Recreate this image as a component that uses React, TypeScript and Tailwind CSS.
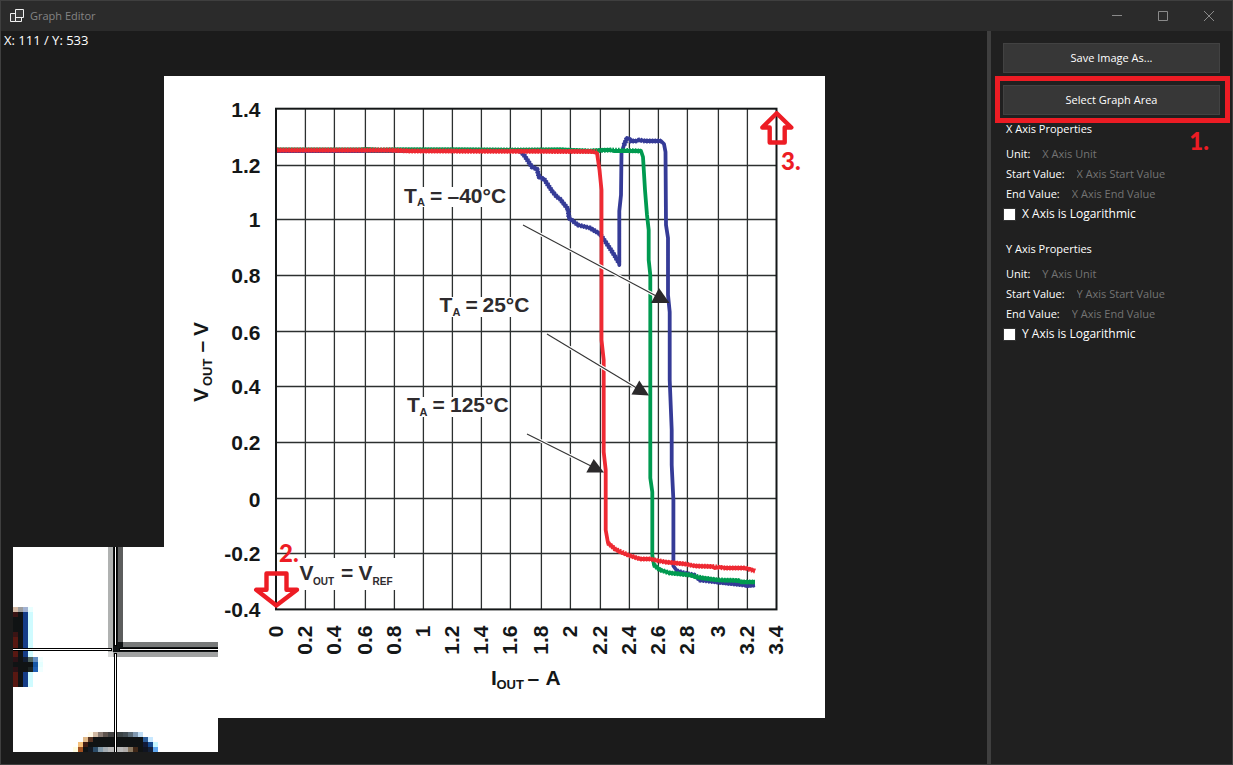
import React from 'react';

const GRID_X = [305, 334, 365, 394, 423, 452, 481, 510, 541, 570, 600, 629, 658, 687, 718, 747];
const GRID_Y = [165, 219, 275, 331, 386, 442, 498, 553];

const X_LABELS: [number, string][] = [
  [276, '0'], [305, '0.2'], [334, '0.4'], [365, '0.6'], [394, '0.8'], [423, '1'],
  [452, '1.2'], [481, '1.4'], [510, '1.6'], [541, '1.8'], [570, '2'], [600, '2.2'],
  [629, '2.4'], [658, '2.6'], [687, '2.8'], [718, '3'], [747, '3.2'], [776, '3.4'],
];

const Y_LABELS: [number, string][] = [
  [109, '1.4'], [165, '1.2'], [219, '1'], [275, '0.8'], [332, '0.6'],
  [386, '0.4'], [442, '0.2'], [499, '0'], [553, '-0.2'], [609, '-0.4'],
];

const CURVES = [
  {
    color: '#353b97',
    points:
      '277,151 300,151 400,151 520,151 524,155 528,161 532,167 537,169 539,177 544,179 552,191 557,197 560,199 568,209 569,218 578,225 590,228 600,234 607,244 613,253 619,263 619.3,265 619.3,211 621,195 621.5,153 624,145 627,138 630,139 631,141 636,141 639,140 645,141 661,141 664,144 665.5,152 666,225 668,238 668,295 669.7,312 669.7,380 671.7,430 671.7,465 673.4,500 673.4,566 677,571 684,573 694,575 700,580 710,581 717,582 725,583 745,585 747,586 755,585',
  },
  {
    color: '#009a50',
    points:
      '277,149.5 360,149.5 366,149 380,150 395,149.5 460,149.5 520,150 560,149.5 590,151 603,150 610,150 614,151 641,151 643,157 645,190 647,215 648.7,230 648.7,260 650.3,275 650.3,478 652.3,492 652.3,555 654,565 660,570 670,573 690,575 695,577 703,578 718,580 738,580.5 742,582 755,582',
  },
  {
    color: '#ee2a33',
    points:
      '277,150.3 390,150.3 410,151 590,151.5 597,153 599.5,170 601.5,190 601.5,340 603.7,360 603.7,452 605.7,470 605.7,530 608,543 615,549 620,552 628,555 640,559 650,559 665,562 675,563 685,564 695,566 712,566.5 715,568 720,567 725,568 745,568 750,569 755,571',
  },
];

/* Short cross strokes that give the sampled stretches their comb-like edge */
const SAMPLED = [
  { color: '#353b97', points: '520,151 524,155 528,161 532,167 537,169 539,177 544,179 552,191 557,197 560,199 568,209 569,218 578,225 590,228 600,234 607,244 613,253 619,263' },
  { color: '#353b97', points: '624,145 627,138 631,141 636,141 639,140 645,141 661,141' },
  { color: '#353b97', points: '677,571 684,573 694,575 700,580 717,582 745,585 755,585' },
  { color: '#009a50', points: '366,150 460,150 560,150 590,151 610,150 641,151' },
  { color: '#009a50', points: '654,565 660,570 670,573 690,575 703,578 718,580 738,580.5 742,582 755,582' },
  { color: '#ee2a33', points: '277,150 390,150 410,151 597,151.5' },
  { color: '#ee2a33', points: '608,543 615,549 628,555 640,559 650,559 665,562 685,564 695,566 712,566.5 725,568 745,568 755,571' },
];

const POINTERS = [
  { line: '523,225 660,298', head: '659,288 669.5,303 651,303' },
  { line: '547,334 640,390', head: '639.3,380.5 649,395.5 631.5,394.5' },
  { line: '527,434 595,468', head: '593.7,459 604,472.5 586.3,472.5' },
];

function Chart() {
  return (
    <svg
      viewBox="164 76 661 642"
      className="w-[661px] max-w-full bg-white"
      role="img"
      aria-label="Output voltage against output current"
      fontFamily="'Liberation Sans', Arial, sans-serif"
      fontWeight="bold"
      fontSize="21"
      fill="#141718"
    >
      <g strokeWidth="1.3" stroke="#2c3030">
        {GRID_X.map((x) => (
          <line key={x} x1={x + 0.4} x2={x + 0.4} y1="109" y2="609" />
        ))}
        {GRID_Y.map((y) => (
          <line key={y} x1="276" x2="776" y1={y + 0.5} y2={y + 0.5} />
        ))}
      </g>
      <rect x="276" y="108.7" width="500.5" height="500.7" fill="none" stroke="#141718" strokeWidth="2" />

      {Y_LABELS.map(([y, label]) => (
        <text key={label} x="260.5" y={y + 7.5} textAnchor="end">{label}</text>
      ))}
      {X_LABELS.map(([x, label]) => (
        <text key={label} transform={`translate(${x + 7} 625.5) rotate(-90)`} textAnchor="end">{label}</text>
      ))}

      <g fill="white">
        <rect x="402" y="187" width="105" height="20" />
        <rect x="438" y="297" width="93" height="20" />
        <rect x="405" y="397" width="104" height="20" />
        <rect x="298" y="558" width="98" height="32" />
      </g>

      <g fill="none" strokeLinejoin="round">
        {CURVES.map((curve) => (
          <g key={curve.color} stroke={curve.color}>
            <polyline points={curve.points} strokeWidth="3.8" />
            {SAMPLED.filter((s) => s.color === curve.color).map((s) => (
              <polyline key={s.points} points={s.points} strokeWidth="5" strokeDasharray="1.6 1.2" />
            ))}
          </g>
        ))}
      </g>

      {POINTERS.map((p) => (
        <g key={p.line}>
          <polyline points={p.line} fill="none" stroke="white" strokeWidth="3.4" />
          <polyline points={p.line} fill="none" stroke="#333" strokeWidth="1.1" />
          <polygon points={p.head} fill="#2b292b" />
        </g>
      ))}

      <g fill="#2e2b2e">
        <text y="203"><tspan x="404">T</tspan><tspan x="417" y="206" fontSize="11">A</tspan><tspan x="430" y="203">=</tspan><tspan x="447.5">–40°C</tspan></text>
        <text y="312"><tspan x="439.5">T</tspan><tspan x="452.5" y="316" fontSize="11">A</tspan><tspan x="465.5" y="312">=</tspan><tspan x="482.5">25°C</tspan></text>
        <text y="412"><tspan x="407">T</tspan><tspan x="419.5" y="416" fontSize="11">A</tspan><tspan x="432.5" y="412">=</tspan><tspan x="450">125°C</tspan></text>
        <text y="580"><tspan x="299.5">V</tspan><tspan x="313" y="585" fontSize="10">OUT</tspan><tspan x="341" y="580">=</tspan><tspan x="358.5">V</tspan><tspan x="372.5" y="585" fontSize="10">REF</tspan></text>
      </g>
      <text y="685"><tspan x="491">I</tspan><tspan x="496.5" y="689" fontSize="13">OUT</tspan><tspan x="527.5" y="685">–</tspan><tspan x="545.5">A</tspan></text>
      <text transform="translate(207.5 402) rotate(-90)"><tspan x="0" y="0">V</tspan><tspan x="16" y="4" fontSize="13">OUT</tspan><tspan x="49.5" y="0">–</tspan><tspan x="66">V</tspan></text>

      <g fill="none" stroke="#ed1c24" strokeWidth="4.4" strokeLinejoin="round">
        <path d="M776.7 113.2 791.3 127.5H784.7V142.5H769.7V127.5H762.3Z" />
        <path d="M266.5 573.5H286.5V589.8H297L276.3 605.5 256.2 589.8H266.5Z" />
      </g>
      <g fill="#ed1c24" fontFamily="Lato, sans-serif" fontWeight="900" fontSize="24">
        <text x="279" y="562">2.</text>
        <text x="781" y="170">3.</text>
      </g>
    </svg>
  );
}

/* Enlarged pixels: x, y, width, height, colour */
const PIXELS: [number, number, number, number, string][] = [
  [95, 0, 5, 105, '#b0b2b1'], [100, 0, 5, 105, '#101314'], [105, 0, 5, 95, '#5c5d5d'],
  [110, 95, 95, 5, '#777979'], [105, 95, 5, 10, '#101314'], [110, 100, 95, 5, '#101314'],
  [100, 105, 105, 5, '#a0a1a1'], [95, 105, 5, 5, '#dcdcdc'],
  [0, 60, 5, 5, '#d4baa6'], [5, 60, 5, 5, '#9e9e9e'], [10, 60, 5, 5, '#a2b2d2'], [15, 60, 5, 5, '#eaffff'],
  [0, 65, 5, 75, '#581812'], [5, 65, 5, 75, '#101314'], [10, 65, 5, 75, '#153d88'], [15, 65, 5, 75, '#cffbff'],
  [0, 65, 5, 5, '#3a1414'], [0, 70, 5, 15, '#101314'], [0, 85, 5, 5, '#3a1414'],
  [0, 110, 5, 5, '#2a1216'], [10, 110, 5, 5, '#121e34'], [15, 110, 5, 5, '#4f6460'], [20, 110, 5, 5, '#5f8cc2'], [25, 110, 5, 5, '#f0ffff'],
  [0, 115, 20, 5, '#101314'], [20, 115, 5, 5, '#1656a5'], [25, 115, 5, 5, '#e5ffff'],
  [0, 120, 5, 5, '#2a1216'], [10, 120, 5, 5, '#101314'], [15, 120, 5, 5, '#1c2424'], [20, 120, 5, 5, '#2060b4'], [25, 120, 5, 5, '#f0ffff'],
  [75, 185, 5, 5, '#fffae8'], [80, 185, 5, 5, '#d2baa4'], [85, 185, 5, 5, '#8a7c74'], [90, 185, 5, 5, '#5e544e'],
  [95, 185, 10, 5, '#424242'], [105, 185, 5, 5, '#3c4446'], [110, 185, 5, 5, '#444e54'], [115, 185, 5, 5, '#5c6c78'],
  [120, 185, 5, 5, '#8098b0'], [125, 185, 5, 5, '#bfdcf4'],
  [70, 190, 5, 5, '#e0b888'], [75, 190, 5, 5, '#583424'], [80, 190, 50, 5, '#101314'], [130, 190, 5, 5, '#2c5c98'], [135, 190, 5, 5, '#c8e8ff'],
  [65, 195, 5, 5, '#f5c07a'], [70, 195, 5, 5, '#401c14'], [75, 195, 55, 5, '#101314'], [130, 195, 5, 5, '#111a38'], [135, 195, 5, 5, '#154a90'], [140, 195, 5, 5, '#c8f8ff'],
  [60, 200, 5, 5, '#fffde0'], [65, 200, 5, 5, '#a05020'], [70, 200, 5, 5, '#101314'], [75, 200, 5, 5, '#141a24'], [80, 200, 5, 5, '#2c4c68'],
  [85, 200, 5, 5, '#8098a8'], [90, 200, 5, 5, '#a4acb2'], [95, 200, 15, 5, '#b8b8b8'], [110, 200, 5, 5, '#b0acaa'], [115, 200, 5, 5, '#8a7860'],
  [120, 200, 5, 5, '#402818'], [125, 200, 5, 5, '#101314'], [130, 200, 5, 5, '#101420'], [135, 200, 5, 5, '#142038'], [140, 200, 5, 5, '#60a8f0'],
];

function Magnifier() {
  return (
    <svg
      viewBox="0 0 205 205"
      shapeRendering="crispEdges"
      className="absolute bottom-3 left-3 size-[205px] bg-white"
      role="img"
      aria-label="Magnified cursor area"
    >
      {PIXELS.map(([x, y, w, h, fill], i) => (
        <rect key={i} x={x} y={y} width={w} height={h} fill={fill} />
      ))}
      <path fill="#000" d="M0 101H99V104H0ZM106 101H205V104H106ZM101 0H104V99H101ZM101 106H104V205H101Z" />
      <path fill="#fff" d="M0 102H98V103H0ZM107 102H205V103H107ZM102 0H103V98H102ZM102 107H103V205H102Z" />
    </svg>
  );
}

function TitleBar() {
  const control = 'flex w-[46px] items-center justify-center';
  return (
    <header className="flex h-[30px] shrink-0 items-stretch bg-[#2b2b2b]">
      <div className="flex flex-1 items-center gap-[5px] pl-2">
        <svg width="16" height="16" viewBox="0 0 16 16" fill="#3a3a3a" stroke="#f0f0f0" aria-hidden="true">
          <path d="M1.5 5.5H6.5V13.5H1.5ZM6.5 9.5H12.5V13.5H6.5ZM6.5 1.5H14.5V9.5H6.5Z" />
        </svg>
        <h1 className="text-[#848484]">Graph Editor</h1>
      </div>
      <button type="button" aria-label="Minimize" className={control}>
        <svg width="12" height="12" viewBox="0 0 12 12" fill="none" stroke="#8a8a8a"><path d="M1 5.5H11" /></svg>
      </button>
      <button type="button" aria-label="Maximize" className={control}>
        <svg width="12" height="12" viewBox="0 0 12 12" fill="none" stroke="#8a8a8a"><path d="M1.5 1.5H10.5V10.5H1.5Z" /></svg>
      </button>
      <button type="button" aria-label="Close" className={control}>
        <svg width="12" height="12" viewBox="0 0 12 12" fill="none" stroke="#8a8a8a"><path d="M1 1 11 11M11 1 1 11" /></svg>
      </button>
    </header>
  );
}

function AxisField({ axis, name }: { axis: string; name: string }) {
  const id = `${axis}-${name}`.toLowerCase().replace(' ', '-');
  return (
    <div className="flex h-5 items-center gap-3 pl-[3px]">
      <label htmlFor={id} className="shrink-0">{name}:</label>
      <input
        id={id}
        type="text"
        placeholder={`${axis} Axis ${name}`}
        className="h-5 min-w-0 flex-1 bg-transparent outline-none placeholder:text-[#747474]"
      />
    </div>
  );
}

function AxisSection({ axis }: { axis: string }) {
  return (
    <section>
      <h2 className="mb-[5px] h-5 pl-[3px]">{axis} Axis Properties</h2>
      <AxisField axis={axis} name="Unit" />
      <AxisField axis={axis} name="Start Value" />
      <AxisField axis={axis} name="End Value" />
      <label className="flex h-5 items-center gap-[6px] text-xs">
        <input type="checkbox" className="size-[13px] appearance-none border border-[#333333] bg-white checked:bg-[#4a90d9]" />
        {axis} Axis is Logarithmic
      </label>
    </section>
  );
}

export default function App() {
  const button = 'h-[30px] w-full border border-[#424242] bg-[#373737] text-center';
  return (
    <div className="flex min-h-screen flex-col border border-[#3f3f3f] bg-[#1b1b1b] font-['Open_Sans','Noto_Sans',sans-serif] text-[11px] leading-5 text-white">
      <TitleBar />
      <div className="flex flex-1">
        <main className="relative flex min-w-0 flex-1 items-center justify-center pb-[2px]">
          <p className="absolute top-0 left-[3px] text-[13px] leading-[18px]">X: 111 / Y: 533</p>
          <Chart />
          <Magnifier />
        </main>
        <aside className="flex w-[245px] shrink-0 flex-col gap-3 border-l-4 border-[#3f3f3f] bg-[#202020] p-3">
          <button type="button" className={button}>Save Image As...</button>
          <div className="relative">
            <button type="button" className={button}>Select Graph Area</button>
            <div className="pointer-events-none absolute -top-[9px] -right-[10px] -bottom-2 -left-2 border-5 border-[#ed1c24]" />
            <span className="absolute top-[46px] right-[11px] font-['Lato',sans-serif] text-2xl leading-5 font-black text-[#ed1c24]">1.</span>
          </div>
          <div className="-mt-2 flex flex-col gap-[15px]">
            <AxisSection axis="X" />
            <AxisSection axis="Y" />
          </div>
        </aside>
      </div>
    </div>
  );
}
